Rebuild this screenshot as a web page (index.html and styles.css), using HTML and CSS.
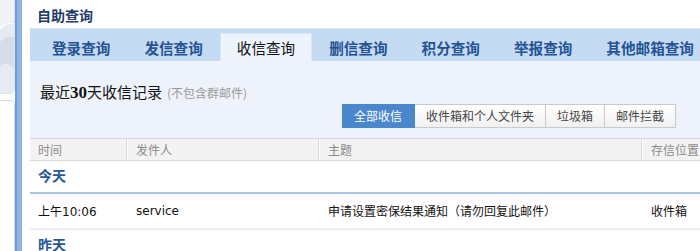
FILE: index.html
```html
<!DOCTYPE html>
<html lang="zh-CN">
<head>
<meta charset="utf-8">
<title>自助查询</title>
<link rel="stylesheet" href="styles.css">
</head>
<body>
<div class="page">
  <aside class="side">
    <div class="side-top">
      <svg class="side-art" width="15" height="94" viewBox="0 0 15 94">
        <path d="M0 30 Q6 24 15 20 L15 94 L0 94 Z" fill="#e6ebf1"/>
        <path d="M0 42 Q8 34 15 38 L15 70 Q6 60 0 66 Z" fill="#d5dde6"/>
        <path d="M0 28 Q7 22 15 24" stroke="#ffffff" stroke-width="1.2" fill="none"/>
      </svg>
    </div>
    <div class="side-bottom"></div>
  </aside>
  <div class="rail"></div>
  <main class="main">
    <h1 class="title">自助查询</h1>
    <nav class="tabs">
      <a class="tab">登录查询</a>
      <a class="tab">发信查询</a>
      <a class="tab active">收信查询</a>
      <a class="tab">删信查询</a>
      <a class="tab">积分查询</a>
      <a class="tab">举报查询</a>
      <a class="tab">其他邮箱查询</a>
    </nav>
    <section class="panel">
      <div class="summary">最近<b class="num">30</b>天收信记录<span class="note">(不包含群邮件)</span></div>
      <div class="filters">
        <span class="filter on">全部收信</span>
        <span class="filter">收件箱和个人文件夹</span>
        <span class="filter">垃圾箱</span>
        <span class="filter">邮件拦截</span>
      </div>
    </section>
    <div class="list">
      <div class="row head">
        <div class="c c-time">时间</div>
        <div class="c c-from">发件人</div>
        <div class="c c-subj">主题</div>
        <div class="c c-loc">存信位置</div>
      </div>
      <div class="group">今天</div>
      <div class="row item">
        <div class="c c-time">上午<span class="lat">10:06</span></div>
        <div class="c c-from lat">service</div>
        <div class="c c-subj">申请设置密保结果通知（请勿回复此邮件）</div>
        <div class="c c-loc">收件箱</div>
      </div>
      <div class="group last">昨天</div>
    </div>
  </main>
</div>
</body>
</html>
```

FILE: styles.css
```css
* { box-sizing: border-box; }
html, body { margin: 0; padding: 0; background: #ffffff; }
body {
  font-family: "Noto Sans CJK SC", "Noto Sans", sans-serif;
  color: #000;
  overflow: hidden;
}
.page {
  display: flex;
  width: 700px;
  height: 251px;
  overflow: hidden;
}
.side {
  width: 15px;
  flex: none;
  display: flex;
  flex-direction: column;
  gap: 6px;
}
.side-top {
  height: 94px;
  flex: none;
  background: #f1f3f6;
  border-radius: 0 0 5px 0;
  border-right: 1px solid #dfe4ea;
  border-bottom: 1px solid #dfe4ea;
  overflow: hidden;
}
.side-art { display: block; }
.side-bottom {
  flex: 1;
  background: #ffffff;
  border-radius: 0 5px 0 0;
  border-top: 1px solid #d5dbe3;
  border-right: 1px solid #d5dbe3;
}
.rail {
  width: 7px;
  flex: none;
  background: #8fb5e5;
  border-left: 2px solid #6e9bd6;
}
.main {
  flex: 1;
  margin-left: 8px;
  display: block;
  min-width: 0;
}
.title {
  margin: 0;
  height: 28px;
  padding: 6px 0 0 7px;
  font-size: 14px;
  line-height: 18px;
  font-weight: bold;
  color: #1e3b66;
}
.tabs {
  display: flex;
  height: 33px;
  padding: 4px 0 0 5px;
  background: #c5dbf3;
  border-top: 1px solid #d3e3f6;
  align-items: stretch;
  white-space: nowrap;
}
.tab {
  flex: none;
  padding: 0 16px;
  font-size: 14.6px;
  line-height: 27px;
  font-weight: bold;
  color: #245394;
  border: 1px solid transparent;
  border-bottom: none;
}
.tab.active {
  background: #eef4fb;
  border-color: #d7e5f6;
  color: #111;
  font-weight: normal;
}
.panel {
  height: 77px;
  background: #eef3fb;
  padding: 21px 24px 0 10px;
}
.summary {
  font-size: 15px;
  line-height: 20px;
  color: #111;
}
.num {
  font-family: "Liberation Serif", serif;
  font-weight: bold;
  font-size: 17px;
}
.note {
  margin-left: 5px;
  font-size: 12px;
  color: #9a9a9a;
}
.filters {
  display: flex;
  justify-content: flex-end;
  margin-top: 1px;
}
.filter {
  height: 24px;
  padding: 0 11px;
  font-size: 12px;
  line-height: 22px;
  color: #444;
  background: linear-gradient(#ffffff, #f1f1f1);
  border: 1px solid #c9c9c9;
  border-left: none;
  white-space: nowrap;
}
.filter.on {
  background: #4b87cc;
  border-color: #4b87cc;
  color: #ffffff;
  padding: 0 12px;
}
.row {
  display: flex;
}
.c {
  flex: none;
  padding-left: 8px;
  white-space: nowrap;
  overflow: hidden;
}
.c-time { width: 96px; }
.c-from { width: 192px; }
.c-subj { width: 323px; }
.c-loc { flex: 1; }
.head {
  height: 23px;
  background: #f3f3f3;
  border-top: 1px solid #d9d9d9;
  border-bottom: 1px solid #d9d9d9;
  font-size: 12px;
  line-height: 21px;
  color: #8a8a8a;
}
.head .c + .c {
  border-left: 1px solid #d9d9d9;
  box-shadow: inset 1px 0 0 #ffffff;
  padding-left: 9px;
}
.group {
  height: 33px;
  padding: 4px 0 0 8px;
  font-size: 14px;
  line-height: 20px;
  font-weight: bold;
  color: #2a5794;
  border-bottom: 2px solid #a8c6e9;
}
.group.last {
  border-bottom: none;
}
.item {
  height: 36px;
  border-bottom: 2px solid #eeeeee;
  font-size: 12px;
  line-height: 34px;
  color: #111;
}
.item .c + .c { padding-left: 10px; }
.lat {
  font-family: "DejaVu Sans", sans-serif;
  font-size: 12px;
}
```
